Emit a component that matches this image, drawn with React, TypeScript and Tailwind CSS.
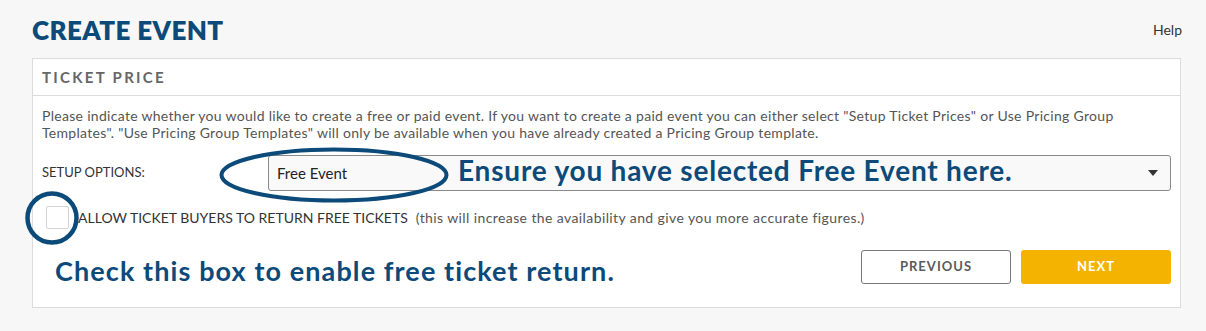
import type { JSX } from 'react';

const NAVY = 'text-[#0c4a79]';

function SetupSelect(): JSX.Element {
  return (
    <div className="relative flex h-9 flex-1 items-center rounded-[3px] border border-[#8a8a8a] bg-[#f9f9f9] pl-2 pr-3">
      <span className="text-[15px] text-[#222]">Free Event</span>
      <svg className="ml-auto h-2 w-2.5" viewBox="0 0 10 6">
        <path d="M0 0h10L5 6z" fill="#333" />
      </svg>
    </div>
  );
}

export default function App(): JSX.Element {
  return (
    <div className="h-[331px] w-full overflow-hidden bg-[#f7f7f7] pl-8 pr-[25px] pt-[15px] font-['Lato',sans-serif]">
      <div className="flex items-start justify-between">
        <h1 className={`text-[26px] font-extrabold leading-[30px] tracking-[0.4px] ${NAVY}`}>CREATE EVENT</h1>
        <span className="mr-[-1px] mt-[7px] text-[14px] leading-[16px] text-[#333]">Help</span>
      </div>

      <div className="mt-[13px] border border-[#dcdcdc] bg-white">
        <div className="flex h-[37px] items-center border-b border-[#dcdcdc] px-[9px]">
          <h2 className="text-[15px] font-bold tracking-[2.3px] text-[#666]">TICKET PRICE</h2>
        </div>

        <div className="relative px-[9px] pb-[22px] pt-[11px]">
          <p className="text-[14px] leading-[17px] tracking-[0.3px] text-[#555]">
            Please indicate whether you would like to create a free or paid event. If you want to create a paid event you can
            either select "Setup Ticket Prices" or Use Pricing Group Templates". "Use Pricing Group Templates" will only be
            available when you have already created a Pricing Group template.
          </p>

          <div className="mt-[14px] flex items-center">
            <label className="w-[226px] text-[13px] text-[#333]">SETUP OPTIONS:</label>
            <SetupSelect />
          </div>

          <div className="mt-[15px] flex items-center">
            <span className="ml-[4px] h-[23px] w-[23px] rounded-[2px] border border-[#d4d4d4] bg-white" />
            <span className="ml-[9px] text-[14px] text-[#333]">ALLOW TICKET BUYERS TO RETURN FREE TICKETS</span>
            <span className="ml-[8px] text-[14px] tracking-[0.4px] text-[#555]">
              (this will increase the availability and give you more accurate figures.)
            </span>
          </div>

          <div className="mt-[21px] flex items-start">
            <p className={`ml-[13px] mt-[7px] text-[27px] font-bold leading-[28px] tracking-[1.1px] ${NAVY}`}>
              Check this box to enable free ticket return.
            </p>
            <div className="ml-auto flex gap-[10px]">
              <button className="h-[34px] w-[150px] rounded-[3px] border border-[#777] bg-white text-[13px] font-bold tracking-[1px] text-[#5b5b5b]">
                PREVIOUS
              </button>
              <button className="h-[34px] w-[150px] rounded-[3px] bg-[#f5b301] text-[13px] font-bold tracking-[1px] text-white">
                NEXT
              </button>
            </div>
          </div>

          {/* annotation overlays */}
          <svg className="pointer-events-none absolute left-[186px] top-[51px] h-[56px] w-[230px]" viewBox="0 0 230 56">
            <ellipse cx="115" cy="28" rx="112.5" ry="25.5" fill="none" stroke="#0c4a79" strokeWidth="4" />
          </svg>
          <span className={`pointer-events-none absolute left-[425px] top-[60px] whitespace-nowrap text-[28px] font-bold leading-[28px] tracking-[0.8px] ${NAVY}`}>
            Ensure you have selected Free Event here.
          </span>
          <svg className="pointer-events-none absolute left-[-9px] top-[94px] h-[56px] w-[56px]" viewBox="0 0 56 56">
            <circle cx="28" cy="28" r="24.5" fill="none" stroke="#0c4a79" strokeWidth="4.5" />
          </svg>
        </div>
      </div>
    </div>
  );
}
